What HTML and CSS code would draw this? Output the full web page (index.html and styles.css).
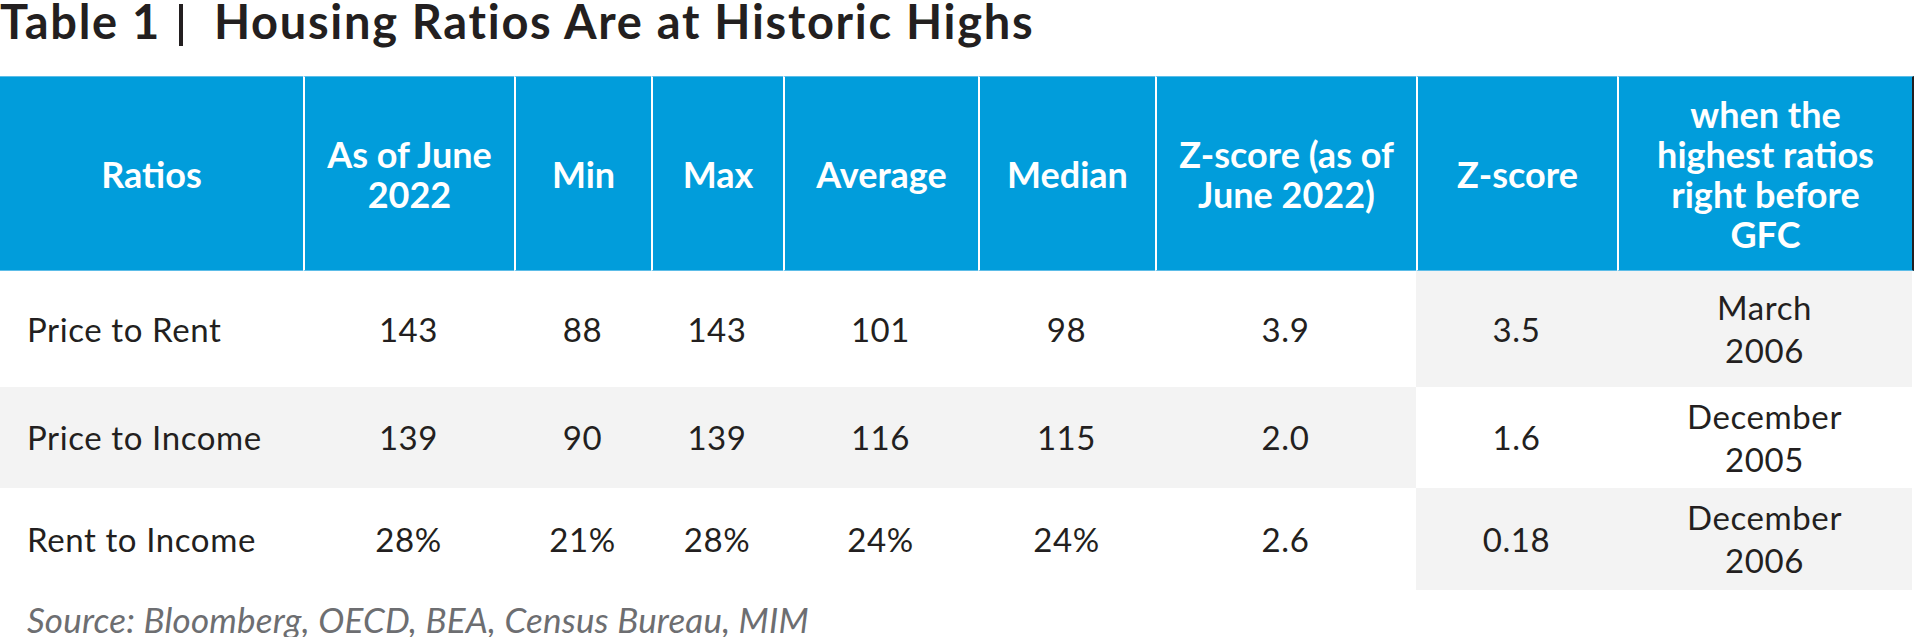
FILE: index.html
```html
<!DOCTYPE html>
<html lang="en">
<head>
    <meta charset="UTF-8">
    <meta name="viewport" content="width=device-width, initial-scale=1.0">
    <title>Housing Ratios Are at Historic Highs</title>
    <link rel="stylesheet" href="styles.css">
</head>
<body>
    <h1 class="title">Table 1<span class="sep"></span>Housing Ratios Are at Historic Highs</h1>

    <table class="ratios">
        <colgroup>
            <col style="width: 303px">
            <col style="width: 211px">
            <col style="width: 137px">
            <col style="width: 132px">
            <col style="width: 195px">
            <col style="width: 177px">
            <col style="width: 261px">
            <col style="width: 201px">
            <col style="width: 297px">
        </colgroup>
        <thead>
            <tr>
                <th>Ratios</th>
                <th>As of June<br>2022</th>
                <th>Min</th>
                <th>Max</th>
                <th>Average</th>
                <th>Median</th>
                <th>Z-score (as of<br>June 2022)</th>
                <th>Z-score</th>
                <th>when the<br>highest ratios<br>right before<br>GFC</th>
            </tr>
        </thead>
        <tbody>
            <tr class="first">
                <td class="label">Price to Rent</td>
                <td>143</td>
                <td>88</td>
                <td>143</td>
                <td>101</td>
                <td>98</td>
                <td>3.9</td>
                <td class="shade">3.5</td>
                <td class="shade">March<br>2006</td>
            </tr>
            <tr class="striped">
                <td class="label">Price to Income</td>
                <td>139</td>
                <td>90</td>
                <td>139</td>
                <td>116</td>
                <td>115</td>
                <td>2.0</td>
                <td class="plain">1.6</td>
                <td class="plain">December<br>2005</td>
            </tr>
            <tr class="last">
                <td class="label">Rent to Income</td>
                <td>28%</td>
                <td>21%</td>
                <td>28%</td>
                <td>24%</td>
                <td>24%</td>
                <td>2.6</td>
                <td class="shade">0.18</td>
                <td class="shade">December<br>2006</td>
            </tr>
        </tbody>
    </table>

    <p class="source">Source: Bloomberg, OECD, BEA, Census Bureau, MIM</p>
</body>
</html>
```

FILE: styles.css
```css
body {
    margin: 0;
    font-family: 'Lato', 'Liberation Sans', sans-serif;
    color: #231f20;
    background-color: #fff;
}

.title {
    margin: 0 0 30px 0;
    font-size: 47px;
    line-height: 43px;
    font-weight: 700;
    letter-spacing: 1.7px;
    color: #231f20;
    white-space: nowrap;
}

.sep {
    display: inline-block;
    width: 4px;
    height: 42px;
    margin: 0 31px 0 18px;
    background-color: #231f20;
    vertical-align: -7px;
}

.ratios {
    width: 1914px;
    table-layout: fixed;
    border-collapse: separate;
    border-spacing: 0;
}

.ratios th {
    height: 193px;
    padding: 0 6px;
    background-color: #019ddb;
    color: #fff;
    font-size: 36px;
    line-height: 40px;
    font-weight: 700;
    text-align: center;
    vertical-align: middle;
    border-top: 1px solid #5cbde8;
    border-bottom: 1px solid #5cbde8;
    border-left: 2px solid #fff;
}

.ratios th:first-child {
    border-left: none;
}

.ratios th:last-child {
    border-right: 2px solid #231f20;
}

.ratios td {
    padding: 0 8px;
    font-size: 33px;
    line-height: 43px;
    font-weight: 400;
    letter-spacing: 0.6px;
    text-align: center;
    vertical-align: middle;
    background-color: #fff;
}

.ratios td:last-child {
    border-right: 2px solid #fff;
}

.ratios td.label {
    text-align: left;
    padding-left: 27px;
}

.ratios tr.first td {
    height: 116px;
}

.ratios tr.striped td {
    height: 101px;
    background-color: #f3f3f3;
}

.ratios tr.last td {
    height: 102px;
}

.ratios td.shade {
    background-color: #f3f3f3;
}

.ratios tr.striped td.plain {
    background-color: #fff;
}

.source {
    margin: 11px 0 0 27px;
    font-size: 35px;
    line-height: 36px;
    font-style: italic;
    font-weight: 400;
    letter-spacing: 0.2px;
    color: #6d6e71;
}
```
